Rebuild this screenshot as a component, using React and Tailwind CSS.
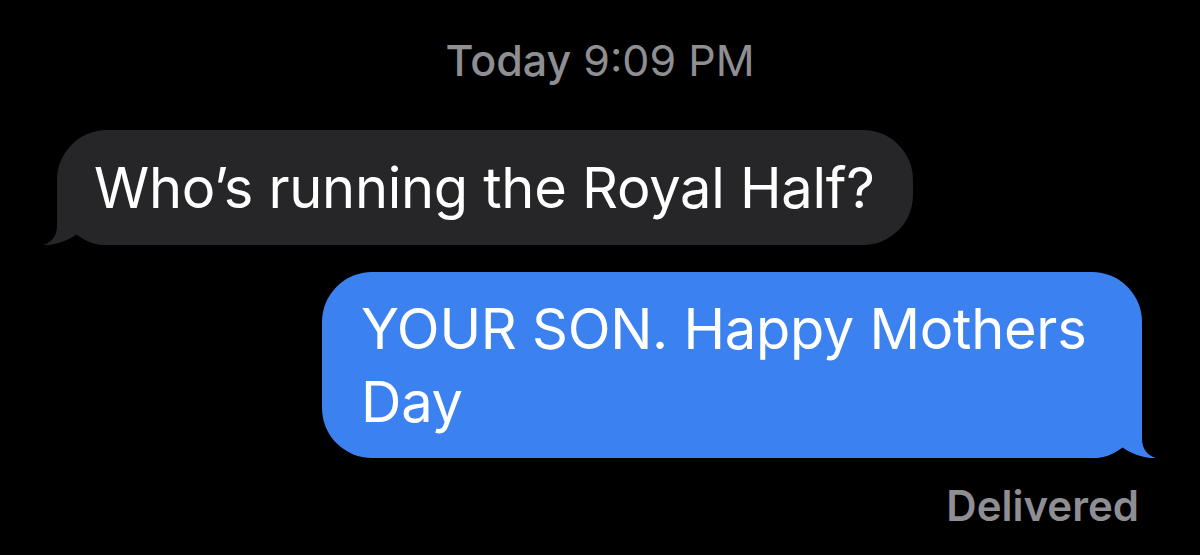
const font = { fontFamily: "Inter, 'Noto Sans', sans-serif" };

function Tail({ color, flip }) {
  return (
    <svg
      width="70"
      height="56"
      viewBox="0 0 70 56"
      className={
        flip
          ? "absolute bottom-0 left-[-14px] -scale-x-100"
          : "absolute bottom-0 right-[-14px]"
      }
    >
      <path
        d="M0 0 H56 V37 C56 47 62 54 70 56 C62 57 46 53 36 45 C28 52 18 56 8 56 H0 Z"
        fill={color}
      />
    </svg>
  );
}

export default function App() {
  return (
    <div
      className="w-[1200px] h-[555px] bg-black flex flex-col overflow-hidden antialiased"
      style={font}
    >
      <div className="pt-[39px] text-center text-[43px] leading-none text-[#8e8e93]">
        <span className="font-medium">Today</span> 9:09 PM
      </div>

      <div className="mt-[48px] ml-[57px] self-start relative">
        <Tail color="#262628" flip />
        <div className="relative w-[856px] h-[115px] rounded-[50px] bg-[#262628] flex items-center pl-[37px] text-white text-[56px] leading-none tracking-[-0.005em] whitespace-nowrap">
          Who’s running the Royal Half?
        </div>
      </div>

      <div className="mt-[27px] mr-[58px] self-end relative">
        <Tail color="#3b82f0" />
        <div className="relative w-[820px] rounded-[50px] bg-[#3b82f0] pl-[39px] pt-[21px] pb-[19px] text-white text-[56px] leading-[73px] tracking-[-0.005em] whitespace-nowrap">
          YOUR SON. Happy Mothers
          <br />
          Day
        </div>
      </div>

      <div className="mt-[27px] mr-[61px] self-end text-[42px] leading-none font-semibold text-[#8e8e93]">
        Delivered
      </div>
    </div>
  );
}
